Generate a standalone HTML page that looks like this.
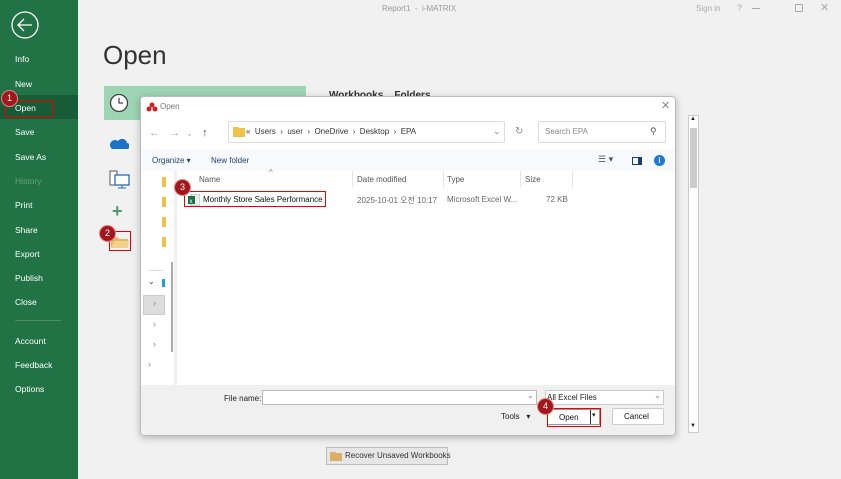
<!DOCTYPE html>
<html><head><meta charset="utf-8"><style>
*{box-sizing:border-box;margin:0;padding:0}
body{width:841px;height:479px;overflow:hidden;background:#f1f1f1;font-family:"Liberation Sans","Noto Sans CJK KR",sans-serif;position:relative;font-size:9px;color:#222}
.abs{position:absolute}
.side{left:0;top:0;width:78px;height:479px;background:#217346}
.side div{position:absolute;left:15px;color:#fff;font-size:8.5px}
.badge{position:absolute;width:15px;height:15px;border-radius:50%;background:#a3171c;color:#fff;font-size:9px;text-align:center;line-height:15px;box-shadow:0 0 0 1px #d88}
.red{position:absolute;border:1.5px solid #e00}
.dlg{left:140px;top:96px;width:536px;height:340px;background:#fff;border:1px solid #bbb;box-shadow:0 2px 8px rgba(0,0,0,.25);border-radius:4px;overflow:hidden}
.t{position:absolute;white-space:nowrap}
</style></head><body>
<div class="abs side">
 <svg class="abs" style="left:10px;top:10px" width="30" height="30" viewBox="0 0 30 30"><circle cx="15" cy="15" r="13" fill="none" stroke="#fff" stroke-width="1.3"/><path d="M8 15h14M14 9l-6 6 6 6" fill="none" stroke="#fff" stroke-width="1.3"/></svg>
 <div style="top:54px">Info</div>
 <div style="top:79px">New</div>
 <div style="left:0;top:95px;width:78px;height:24px;background:#185c37"></div>
 <div style="top:103px">Open</div>
 <div style="top:127px">Save</div>
 <div style="top:152px">Save As</div>
 <div style="top:176px;color:#6a9c7e">History</div>
 <div style="top:200px">Print</div>
 <div style="top:225px">Share</div>
 <div style="top:249px">Export</div>
 <div style="top:273px">Publish</div>
 <div style="top:297px">Close</div>
 <div style="top:320px;width:46px;height:1px;background:#4a8f67"></div>
 <div style="top:336px">Account</div>
 <div style="top:360px">Feedback</div>
 <div style="top:384px">Options</div>
</div>
<div class="red" style="left:5px;top:100px;width:48px;height:17px"></div>
<div class="badge" style="left:2px;top:91px">1</div>

<div class="t" style="left:382px;top:4px;color:#999;font-size:8px">Report1 &nbsp;- &nbsp;i-MATRIX</div>
<div class="t" style="left:696px;top:4px;color:#aaa;font-size:8px">Sign in</div>
<div class="t" style="left:737px;top:3px;color:#aaa;font-size:9px">?</div>
<div class="t" style="left:752px;top:8px;width:8px;height:1px;background:#aaa"></div>
<div class="t" style="left:795px;top:4px;width:8px;height:8px;border:1px solid #aaa"></div>
<div class="t" style="left:820px;top:1px;color:#aaa;font-size:11px">✕</div>

<div class="t" style="left:103px;top:40px;font-size:26px;color:#333">Open</div>
<div class="abs" style="left:104px;top:86px;width:202px;height:34px;background:#9dd5b4"></div>
<svg class="abs" style="left:109px;top:93px" width="20" height="20"><circle cx="10" cy="10" r="8.5" fill="#fff" stroke="#444" stroke-width="1.3"/><path d="M10 5v5h4" fill="none" stroke="#444" stroke-width="1.3"/></svg>
<div class="t" style="left:329px;top:90px;font-size:10px;font-weight:bold;color:#333">Workbooks &nbsp;&nbsp;&nbsp;Folders</div>
<svg class="abs" style="left:109px;top:136px" width="20" height="14"><path d="M3 13h15a3 3 0 0 0 0-6 5 5 0 0 0-9-2 4 4 0 0 0-6 8z" fill="#1a73c8"/></svg>
<svg class="abs" style="left:109px;top:170px" width="22" height="20"><rect x="1" y="1" width="7" height="14" fill="#fff" stroke="#555"/><rect x="6" y="5" width="14" height="10" fill="#fff" stroke="#2a6cb5" stroke-width="1.3"/><path d="M13 15v3M9 18h8" stroke="#2a6cb5"/></svg>
<div class="t" style="left:112px;top:201px;color:#4a9a6e;font-size:18px;font-weight:bold">+</div>
<svg class="abs" style="left:110px;top:233px" width="20" height="16"><path d="M1 4h6l2 2h9v9H1z" fill="#e2b766"/><path d="M1 15l3-7h15l-1 7z" fill="#f3cf8a"/></svg>
<div class="red" style="left:109px;top:231px;width:22px;height:20px"></div>
<div class="badge" style="left:100px;top:226px">2</div>

<div class="abs" style="left:688px;top:115px;width:11px;height:318px;background:#fff;border:1px solid #ccc"></div>
<div class="abs" style="left:690px;top:128px;width:7px;height:60px;background:#ccc"></div>
<div class="t" style="left:690px;top:116px;font-size:6px">▲</div>
<div class="t" style="left:690px;top:423px;font-size:6px">▼</div>

<div class="abs" style="left:326px;top:447px;width:122px;height:18px;border:1px solid #bbb;background:#e6e6e6"></div>
<svg class="abs" style="left:330px;top:451px" width="13" height="10"><path d="M0 1h5l1 1h6v8H0z" fill="#dcb067"/></svg>
<div class="t" style="left:345px;top:451px;font-size:8px;color:#333">Recover Unsaved Workbooks</div>

<div class="abs dlg">
 <div class="abs" style="left:0;top:0;width:536px;height:20px;background:#fff"></div>
 <svg class="abs" style="left:5px;top:5px" width="12" height="10"><circle cx="6" cy="3" r="2.5" fill="#c22"/><circle cx="3" cy="7" r="2.5" fill="#c22"/><circle cx="9" cy="7" r="2.5" fill="#c22"/></svg>
 <div class="t" style="left:19px;top:5px;color:#777;font-size:8px">Open</div>
 <div class="t" style="left:520px;top:2px;color:#888;font-size:11px">✕</div>
 <div class="t" style="left:8px;top:30px;color:#aaa;font-size:11px">← &nbsp;&nbsp;→ &nbsp;<span style="font-size:8px">⌄</span>&nbsp;&nbsp; <span style="color:#555">↑</span></div>
 <div class="abs" style="left:87px;top:24px;width:277px;height:22px;border:1px solid #ddd;border-radius:2px"></div>
 <svg class="abs" style="left:92px;top:30px" width="12" height="10"><path d="M0 0h5l1 1h6v9H0z" fill="#f0c24a"/></svg>
 <div class="t" style="left:105px;top:30px;font-size:8px;color:#333">« &nbsp;Users &nbsp;› &nbsp;user &nbsp;› &nbsp;OneDrive &nbsp;› &nbsp;Desktop &nbsp;› &nbsp;EPA</div>
 <div class="t" style="left:352px;top:29px;color:#888;font-size:9px">⌄</div>
 <div class="t" style="left:374px;top:29px;color:#888;font-size:10px">↻</div>
 <div class="abs" style="left:397px;top:24px;width:128px;height:22px;border:1px solid #ddd;border-radius:2px"></div>
 <div class="t" style="left:404px;top:30px;color:#888;font-size:8px">Search EPA</div>
 <div class="t" style="left:509px;top:29px;color:#555;font-size:9px">⚲</div>
 <div class="abs" style="left:0;top:52px;width:536px;height:22px;background:#f7f9fc"></div>
 <div class="t" style="left:11px;top:59px;font-size:8px;color:#1e3f6e">Organize ▾</div>
 <div class="t" style="left:70px;top:59px;font-size:8px;color:#1e3f6e">New folder</div>
 <div class="t" style="left:457px;top:57px;font-size:9px;color:#555">☰ ▾</div>
 <div class="abs" style="left:491px;top:60px;width:10px;height:8px;border:1px solid #1e3f6e;border-right-width:4px"></div>
 <div class="abs" style="left:513px;top:58px;width:11px;height:11px;border-radius:50%;background:#1a78d6;color:#fff;font-size:8px;text-align:center;line-height:11px;font-weight:bold">i</div>
 <div class="abs" style="left:0;top:74px;width:33px;height:214px;background:#fff"></div>
 <div class="abs" style="left:30px;top:165px;width:2px;height:90px;background:#aaa"></div>
 <div class="abs" style="left:33px;top:74px;width:3px;height:214px;background:#f0f0f0"></div>
 <div class="abs" style="left:21px;top:80px;width:4px;height:10px;background:#f0c24a"></div>
 <div class="abs" style="left:21px;top:100px;width:4px;height:10px;background:#f0c24a"></div>
 <div class="abs" style="left:21px;top:120px;width:4px;height:10px;background:#f0c24a"></div>
 <div class="abs" style="left:21px;top:140px;width:4px;height:10px;background:#f0c24a"></div>
 <div class="abs" style="left:7px;top:173px;width:16px;height:1px;background:#ddd"></div>
 <div class="t" style="left:7px;top:180px;font-size:8px;color:#444">⌄</div>
 <div class="abs" style="left:21px;top:182px;width:3px;height:8px;background:#1ba1e2"></div>
 <div class="abs" style="left:2px;top:198px;width:22px;height:20px;background:#ddd;border:1px solid #ccc"></div>
 <div class="t" style="left:12px;top:201px;font-size:9px;color:#888">›</div>
 <div class="t" style="left:12px;top:222px;font-size:9px;color:#888">›</div>
 <div class="t" style="left:12px;top:242px;font-size:9px;color:#888">›</div>
 <div class="t" style="left:7px;top:262px;font-size:9px;color:#888">›</div>
 <div class="t" style="left:58px;top:78px;font-size:8px;color:#555">Name</div>
 <div class="t" style="left:128px;top:71px;font-size:8px;color:#888">^</div>
 <div class="abs" style="left:211px;top:74px;width:1px;height:16px;background:#e5e5e5"></div>
 <div class="t" style="left:216px;top:78px;font-size:8px;color:#555">Date modified</div>
 <div class="abs" style="left:302px;top:74px;width:1px;height:16px;background:#e5e5e5"></div>
 <div class="t" style="left:306px;top:78px;font-size:8px;color:#555">Type</div>
 <div class="abs" style="left:379px;top:74px;width:1px;height:16px;background:#e5e5e5"></div>
 <div class="t" style="left:384px;top:78px;font-size:8px;color:#555">Size</div>
 <div class="abs" style="left:431px;top:74px;width:1px;height:16px;background:#e5e5e5"></div>
 <svg class="abs" style="left:47px;top:97px" width="12" height="12"><rect x="3" y="0" width="9" height="12" fill="#e8f0e8" stroke="#999" stroke-width=".6"/><rect x="0" y="2" width="7" height="8" fill="#1d7044"/><text x="1.5" y="9" font-size="6" fill="#fff" font-family="Liberation Sans">x</text></svg>
 <div class="t" style="left:62px;top:98px;font-size:8px;color:#111">Monthly Store Sales Performance</div>
 <div class="red" style="left:43px;top:94px;width:142px;height:16px"></div>
 <div class="badge" style="left:34px;top:83px">3</div>
 <div class="t" style="left:216px;top:98px;font-size:8px;color:#666">2025-10-01 오전 10:17</div>
 <div class="t" style="left:306px;top:98px;font-size:8px;color:#666">Microsoft Excel W...</div>
 <div class="t" style="left:405px;top:98px;font-size:8px;color:#666">72 KB</div>
 <div class="abs" style="left:0;top:288px;width:536px;height:52px;background:#f0f0f0"></div>
 <div class="t" style="left:83px;top:297px;font-size:8px;color:#222">File name:</div>
 <div class="abs" style="left:121px;top:293px;width:275px;height:15px;background:#fff;border:1px solid #bbb"></div>
 <div class="t" style="left:386px;top:294px;color:#888;font-size:8px">⌄</div>
 <div class="abs" style="left:404px;top:293px;width:119px;height:15px;background:#fff;border:1px solid #ccc"></div>
 <div class="t" style="left:406px;top:296px;font-size:8px;color:#222">All Excel Files</div>
 <div class="t" style="left:513px;top:294px;color:#888;font-size:8px">⌄</div>
 <div class="t" style="left:360px;top:315px;font-size:8px;color:#222">Tools &nbsp;&nbsp;▾</div>
 <div class="abs" style="left:406px;top:312px;width:53px;height:16px;background:#fff;border:1px solid #999"></div>
 <div class="t" style="left:418px;top:316px;font-size:8px;color:#111">Open</div>
 <div class="abs" style="left:449px;top:313px;width:1px;height:14px;background:#333"></div>
 <div class="t" style="left:451px;top:314px;font-size:7px">▾</div>
 <div class="red" style="left:406px;top:311px;width:54px;height:19px"></div>
 <div class="badge" style="left:397px;top:302px">4</div>
 <div class="abs" style="left:471px;top:311px;width:52px;height:17px;background:#fff;border:1px solid #ccc;border-radius:2px"></div>
 <div class="t" style="left:483px;top:315px;font-size:8px;color:#111">Cancel</div>
</div>
</body></html>
